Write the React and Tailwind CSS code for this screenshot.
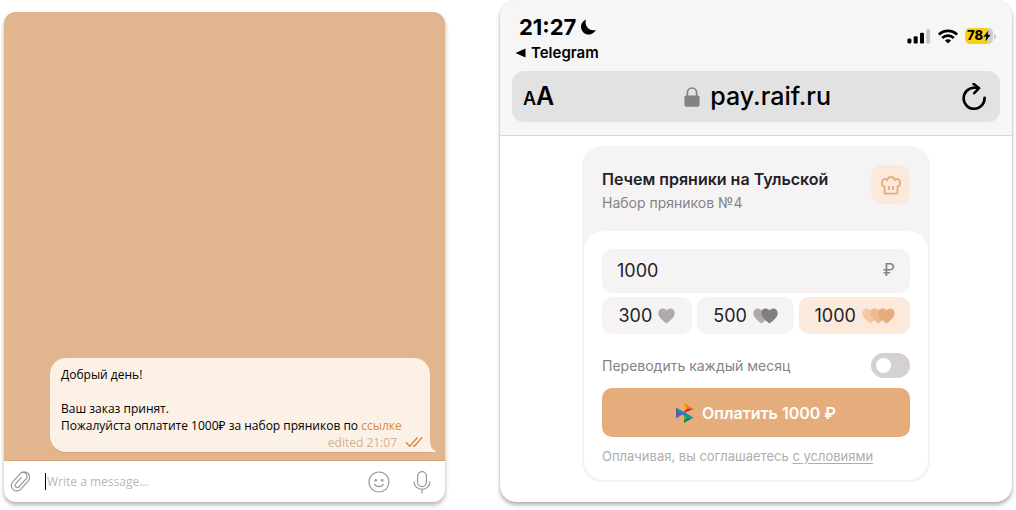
import React, { useState } from "react";

function PaperclipIcon() {
  return (
    <svg viewBox="0 0 20 22" className="h-[22px] w-5" fill="none" stroke="#999999" strokeWidth="1.2" strokeLinecap="round">
      <path
        transform="rotate(42 10 11)"
        d="M15.4 6.6v9.2a5.4 5.4 0 0 1-10.8 0V4.6a3.9 3.9 0 0 1 7.8 0v10.6a2.200 2.200 0 0 1-4.400 0V7M4.600 9V4.600a5.400 5.400 0 0 1 10.800 0v2"
      />
    </svg>
  );
}

function SmileIcon() {
  return (
    <svg viewBox="0 0 22 22" className="size-[22px]" fill="none" stroke="#999999" strokeWidth="1.2" strokeLinecap="round">
      <circle cx="11" cy="11" r="10" />
      <path d="M6.6 13.4c2 3 6.8 3 8.8 0" />
      <circle cx="7.6" cy="9.2" r="1.3" fill="#999999" stroke="none" />
      <circle cx="14.2" cy="9.2" r="1.3" fill="#999999" stroke="none" />
    </svg>
  );
}

function MicIcon() {
  return (
    <svg viewBox="0 0 18 24" className="h-6 w-[18px]" fill="none" stroke="#999999" strokeWidth="1.2" strokeLinecap="round">
      <rect x="4.6" y="1.6" width="8.8" height="15" rx="4.4" />
      <path d="M1 11.8a8 7.6 0 0 0 16 0M9 19.4v3.4" />
    </svg>
  );
}

function ReadTicks() {
  return (
    <svg viewBox="0 0 18 12" className="h-3 w-[18px]" fill="none" stroke="#dc8840" strokeWidth="1.4" strokeLinecap="round" strokeLinejoin="round">
      <path d="m1.2 6.6 3.4 3.6 7.6-8.4M8.6 9.6l.8.6 7.4-8.4" />
    </svg>
  );
}

function Chat() {
  return (
    <section className="mt-3 flex flex-col overflow-hidden rounded-xl bg-[#e1b58e] shadow-[0_3px_4px_rgba(0,0,0,0.3)]">
      <div className="flex flex-1 flex-col items-end justify-end border-b border-[#d9a273] pb-2 pr-[15px] pl-[46px] font-['Open_Sans','Noto_Sans',sans-serif]">
        <div className="relative w-full rounded-2xl rounded-br-none bg-[#fcf1e6] px-[11px] pt-2 pb-0.5 text-xs leading-[17px] text-black shadow-[0_1px_0_#d9a273]">
          <p>Добрый день!</p>
          <p className="mt-[17px]">Ваш заказ принят.</p>
          <p>
            Пожалуйста оплатите 1000₽ за набор пряников по{" "}
            <a href="#pay" className="text-[#dc8840]">ссылке</a>
          </p>
          <div className="-mr-1 flex h-4 items-center justify-end gap-2 text-[#cfb296]">
            <span>edited 21:07</span>
            <ReadTicks />
          </div>
          <svg viewBox="0 0 6 12" className="absolute -right-1.5 bottom-0 h-3 w-1.5" fill="#fcf1e6">
            <path d="M0 0c0 6 2 10 6 11.2V12H0z" />
          </svg>
        </div>
      </div>
      <form className="flex h-[41px] items-center bg-white pr-[14px] pl-[6px]" onSubmit={(e) => e.preventDefault()}>
        <button type="button" aria-label="Attach a file"><PaperclipIcon /></button>
        <span className="ml-[15px] h-[17px] w-px bg-black" />
        <input
          aria-label="Message"
          placeholder="Write a message..."
          className="min-w-0 flex-1 bg-transparent pl-px font-['Open_Sans','Noto_Sans',sans-serif] text-xs text-black outline-none placeholder:text-[#b8b8b8]"
        />
        <button type="button" aria-label="Emoji"><SmileIcon /></button>
        <button type="button" aria-label="Record a voice message" className="ml-[23px]"><MicIcon /></button>
      </form>
    </section>
  );
}

function StatusBar() {
  return (
    <div className="flex items-start justify-between pr-4 pl-[15px]">
      <div>
        <div className="flex items-center gap-1 pl-1 text-[22px] leading-6 font-bold text-black">
          21:27
          <svg viewBox="0 0 16 16" className="size-4" fill="#000">
            <path d="M6 .6A7.7 7.7 0 1 0 15.8 10.8C10.4 13.2 3.8 7.6 6 .6z" />
          </svg>
        </div>
        <a href="#telegram" className="mt-1 flex items-center gap-[5px] text-[15px] leading-5 font-semibold text-black">
          <svg viewBox="0 0 11 10" className="h-2.5 w-[11px]"><path d="M.5 5 10.5.4v9.2z" /></svg>
          Telegram
        </a>
      </div>
      <div className="flex items-center gap-[7px] pt-[13px]">
        <svg viewBox="0 0 24 15" className="h-[15px] w-6">
          <rect x="0.4" y="9.4" width="4" height="5" rx="1.4" />
          <rect x="6.7" y="7.2" width="4" height="7.2" rx="1.2" />
          <rect x="13" y="3.8" width="4" height="10.6" rx="1.2" />
          <rect x="19.2" y="0.2" width="4" height="14.2" rx="1.2" fill="#c5c5c6" />
        </svg>
        <svg viewBox="0 0 20 15" className="h-[15px] w-5" fill="none" stroke="#000" strokeWidth="2.7">
          <path d="M.9 5.6a12.9 12.9 0 0 1 18.2 0M4.2 9a8.2 8.2 0 0 1 11.6 0" />
          <path d="M10 14.6 6.9 11.5a4.4 4.4 0 0 1 6.2 0z" fill="#000" stroke="none" />
        </svg>
        <div className="flex items-center gap-px">
          <div className="flex h-4 w-7 items-center justify-center rounded-[5px] bg-linear-to-r from-[#fbd012] from-80% to-[#cfcdc6] to-80% text-[13px] font-extrabold text-black">
            78
            <svg viewBox="0 0 8 12" className="h-3 w-2"><path d="M5.4.4.4 6.8h2.9l-.9 4.8 5.2-6.8H4.6z" /></svg>
          </div>
          <span className="h-[5px] w-0.5 rounded-r bg-[#c5c5c6]" />
        </div>
      </div>
    </div>
  );
}

function BrowserHeader() {
  return (
    <header className="border-b border-[#d5d5d6] bg-[#f6f6f6] pt-[15px] pb-[13px]">
      <StatusBar />
      <div className="mx-3 mt-2 flex h-[51px] items-center justify-between rounded-xl bg-[#e2e2e2] pr-[13px] pl-[11px] text-black">
        <button type="button" aria-label="Text size" className="flex items-baseline font-semibold">
          <span className="text-lg">A</span>
          <span className="text-[25px]">A</span>
        </button>
        <div className="flex items-center gap-2.5 text-[25px] font-medium">
          <svg viewBox="0 0 16 20" className="h-5 w-4">
            <path d="M3.4 9V5.6a4.6 4.6 0 0 1 9.2 0V9" fill="none" stroke="#838383" strokeWidth="1.7" />
            <rect x="0.4" y="8.6" width="15.2" height="11.2" rx="2" fill="#838383" />
          </svg>
          pay.raif.ru
        </div>
        <button type="button" aria-label="Reload">
          <svg viewBox="0 0 26 28" className="h-7 w-[26px]" fill="none" stroke="#000" strokeWidth="2.6" strokeLinecap="round" strokeLinejoin="round">
            <path d="M23.6 14.8A10.5 10.5 0 1 1 13 4.8h4.4" />
            <path d="M12.6.9 18 5.2l-4.8 5" />
          </svg>
        </button>
      </div>
    </header>
  );
}

const heartPath = "M8.5 15.6C5.4 12.8.3 9.6.3 5.2.3 2.4 2.3.4 4.7.4c1.6 0 3 .8 3.8 2.1C9.3 1.2 10.7.4 12.3.4c2.4 0 4.4 2 4.4 4.8 0 4.4-5.1 7.6-8.2 10.4z";

function Hearts({ colors }) {
  const width = 17 + (colors.length - 1) * 8;
  return (
    <svg viewBox={`0 0 ${width} 16`} width={width} height="16" className="shrink-0">
      {colors.map((color, i) => (
        <path key={i} d={heartPath} fill={color} transform={`translate(${i * 8} 0)`} />
      ))}
    </svg>
  );
}

function ChefHat() {
  return (
    <svg viewBox="0 0 22 20" className="h-5 w-[22px]" fill="none" stroke="#e6ad7c" strokeWidth="1.8">
      <path d="M4.6 18.6V11.7A4 4 0 0 1 5.6 3.9q1 0 1.8.5A3.9 3.9 0 0 1 14.6 4.4q.8-.5 1.8-.5A4 4 0 0 1 17.4 11.7V18.6z" strokeLinejoin="round" />
      <path d="M7.2 3.8v2.6M14.8 3.8v2.6" strokeWidth="1.3" />
      <path d="M9 11v4M13 11v4" strokeWidth="1.9" />
    </svg>
  );
}

function SbpLogo() {
  return (
    <svg viewBox="0 0 18 20" className="h-5 w-[18px]">
      <path d="M0 4.4v11.2L3.6 10z" fill="#5b57a2" />
      <path d="M0 15.6 8 10.6 4 8.2z" fill="#90489c" />
      <path d="M8 0v10l3-2.2V5.2z" fill="#faae1a" />
      <path d="M8 0l9.6 5.8-6.4.2z" fill="#f07f1a" />
      <path d="M17.6 5.8 8 10V8.6l3-2.8z" fill="#e01464" />
      <path d="M8 20V10.6l3.2 2v2.6z" fill="#62b22f" />
      <path d="M8 20l9.6-5.6h-6.2L8 17z" fill="#0d8b43" />
      <path d="M0 4.4l17.6 10-6.4.1L3 9.6z" fill="#1487c9" />
    </svg>
  );
}

const presets = [
  { value: "300", hearts: ["#afabab"] },
  { value: "500", hearts: ["#afabab", "#817e7e"] },
  { value: "1000", hearts: ["#f4c9a3", "#edba8e", "#e6ad7c"] },
];

function PaymentCard() {
  const [amount, setAmount] = useState("1000");
  return (
    <form
      className="mx-auto mt-[10px] w-[348px] max-w-full overflow-hidden rounded-[20px] bg-[#f5f3f4] px-0.5 pb-0.5"
      onSubmit={(e) => e.preventDefault()}
    >
      <div className="flex h-[85px] items-start justify-between px-[18px] pt-[19px]">
        <div className="pt-0.5">
          <h1 className="text-base leading-6 font-semibold text-[#222226]">Печем пряники на Тульской</h1>
          <p className="text-sm leading-6 text-[#858384]">Набор пряников №4</p>
        </div>
        <div className="flex size-[39px] items-center justify-center rounded-[10px] bg-[#fbe9dc]">
          <ChefHat />
        </div>
      </div>
      <div className="rounded-[20px] bg-white px-[18px] pt-[18px] pb-[14px]">
        <div className="flex h-11 items-center rounded-[10px] bg-[#f5f3f4] px-[15px]">
          <input
            aria-label="Сумма"
            value={amount}
            onChange={(e) => setAmount(e.target.value)}
            className="min-w-0 flex-1 bg-transparent text-lg text-[#222226] outline-none"
          />
          <span className="text-[17px] text-[#858384]">₽</span>
        </div>
        <div className="mt-1 grid grid-cols-[90fr_98fr_111fr] gap-[5px]">
          {presets.map(({ value, hearts }) => (
            <button
              key={value}
              type="button"
              onClick={() => setAmount(value)}
              className={`flex h-[37px] items-center justify-center gap-[6px] rounded-[10px] text-lg text-[#222226] ${
                amount === value ? "bg-[#fbe9dc]" : "bg-[#f5f3f4]"
              }`}
            >
              {value}
              <Hearts colors={hearts} />
            </button>
          ))}
        </div>
        <label className="mt-[19px] flex h-[25px] items-center justify-between text-sm text-[#858384]">
          Переводить каждый месяц
          <input
            type="checkbox"
            role="switch"
            className="h-[25px] w-[39px] appearance-none rounded-full bg-[#d5d1d1] p-[5px] before:block before:size-[15px] before:rounded-full before:bg-white checked:bg-[#e6ad7c] checked:before:ml-auto"
          />
        </label>
        <button
          type="submit"
          className="mt-[10px] flex h-[49px] w-full items-center justify-center gap-2 rounded-[10px] bg-[#e6ad7c] text-base font-semibold text-white"
        >
          <SbpLogo />
          Оплатить {amount} ₽
        </button>
        <p className="mt-[9px] text-[13px] leading-5 text-[#b0acad]">
          Оплачивая, вы соглашаетесь{" "}
          <a href="#terms" className="underline underline-offset-2">с условиями</a>
        </p>
      </div>
    </form>
  );
}

export default function App() {
  return (
    <main className="grid min-h-screen grid-cols-[441fr_512fr] gap-[55px] bg-white px-1 pb-2 font-[Inter,sans-serif]">
      <Chat />
      <section className="overflow-hidden rounded-2xl bg-white shadow-[0_3px_4px_rgba(0,0,0,0.3),0_0_1px_rgba(0,0,0,0.3)]">
        <BrowserHeader />
        <PaymentCard />
      </section>
    </main>
  );
}
